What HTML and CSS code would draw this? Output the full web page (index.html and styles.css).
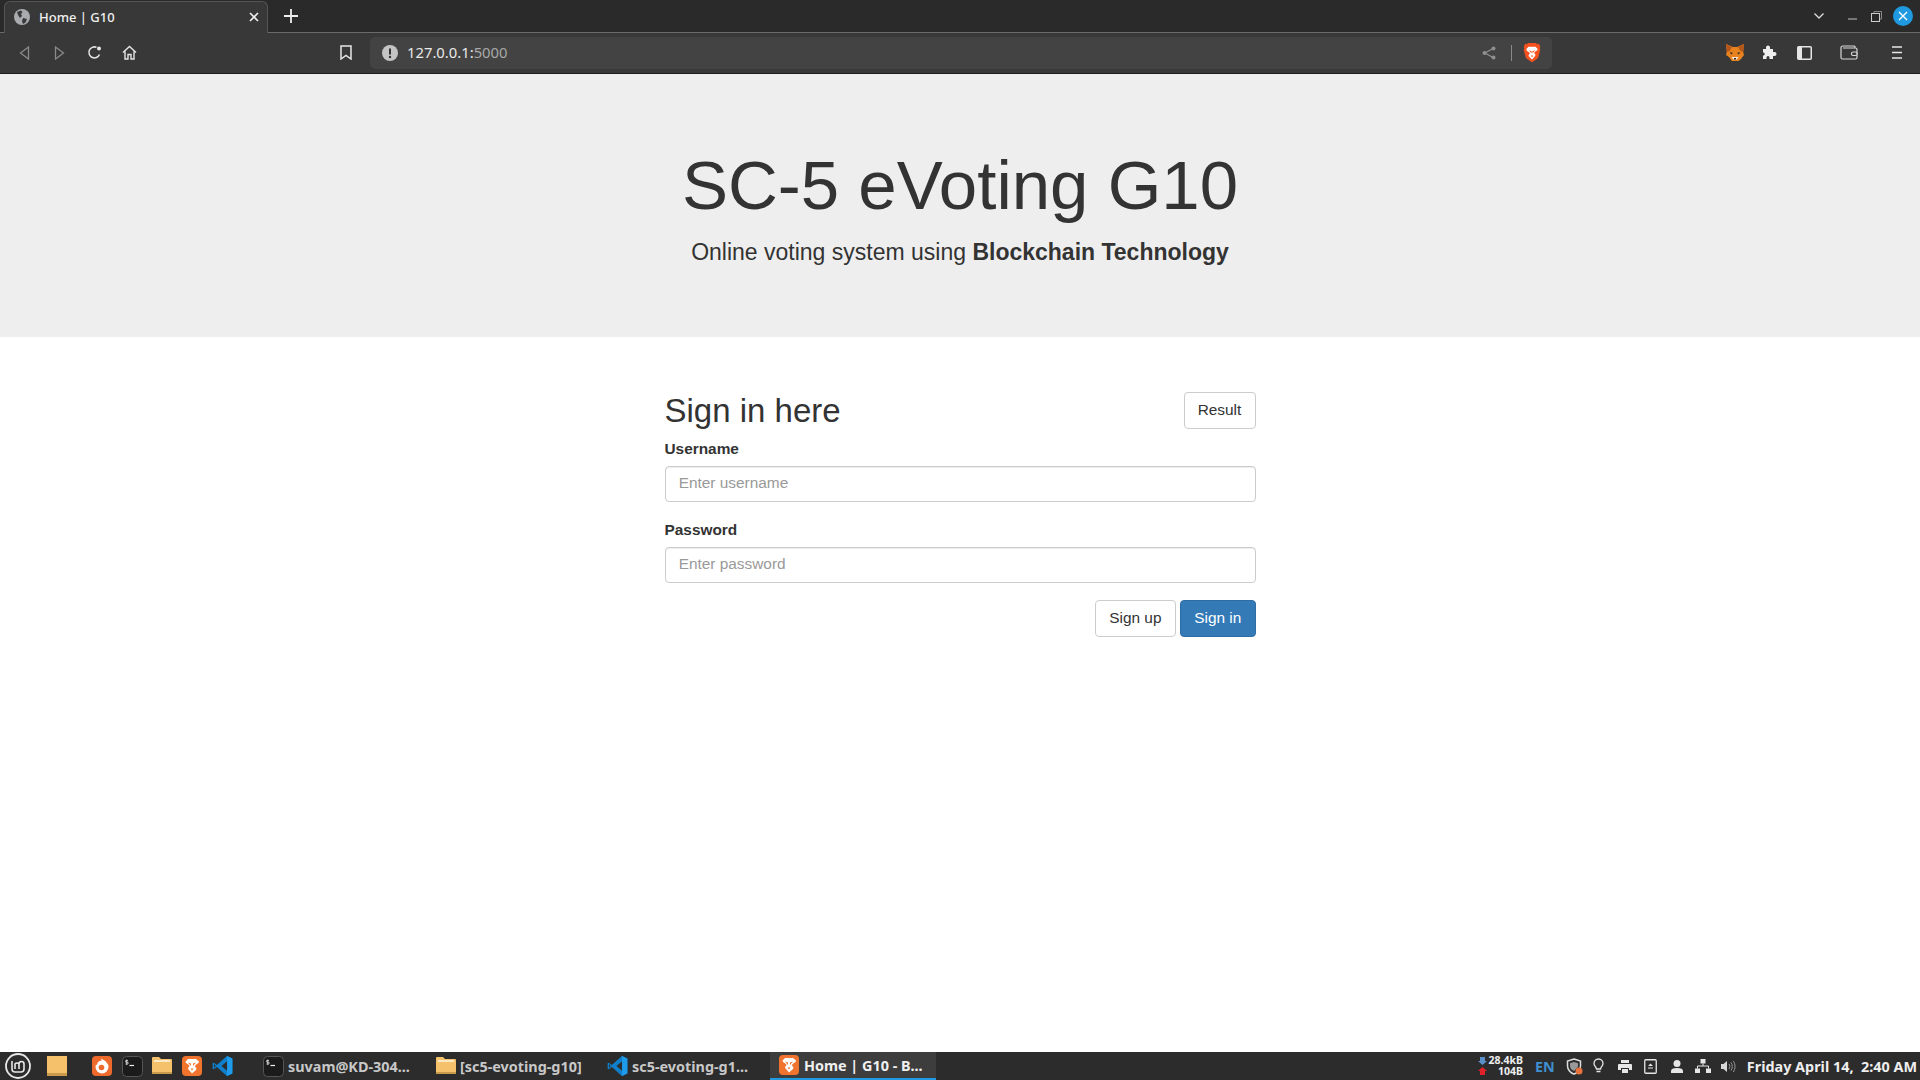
FILE: index.html
```html
<!DOCTYPE html>
<html lang="en">
<head>
    <meta charset="UTF-8">
    <meta name="viewport" content="width=device-width, initial-scale=1.0">
    <title>Home | G10</title>
    <link rel="stylesheet" href="styles.css">
</head>
<body>
    <svg class="defs" width="0" height="0">
        <symbol id="brave" viewBox="0 0 20 24">
            <path fill="#f4511e" d="M5.5 1h9L16 2.500l2-.5 1.500 3.500-.7 1.500.7 1.500-2.200 8.500c-.3 1-1 1.700-1.800 2.300l-4.500 3.200-.5.300h-1l-.5-.3-4.500-3.200c-.8-.6-1.500-1.300-1.800-2.300L.5 9l.7-1.500L.5 6 2 2l2 .5z"/>
            <path fill="#fff" d="M6 5.500h8l2.500 2.500-.5 1.500-3 2-.5 1 1.500 2-.5 1.500L10 20l-3.500-3.500-.5-1.500 1.500-2-.5-1-3-2L3.500 8z"/>
            <path fill="#f4511e" d="M6.500 9.500l3 1v2.500zM13.500 9.500l-3 1v2.500zM8.500 15.500h3L10 17.500z"/>
        </symbol>
        <symbol id="brave-tile" viewBox="0 0 20 20">
            <rect width="20" height="20" rx="4" fill="#f0742d"/>
            <path fill="#fff" d="M6 3h8l3 2.500-.5 1.500-3 2-.5 1.500 1.500 2-.5 1.500L10 17.500 6.500 13.500 6 12l1.500-2L7 9 4 7l-.5-1.500z"/>
            <path fill="#f0742d" d="M6 6.500l3 1v2.500zM14 6.500l-3 1v2.500zM8.500 12.500h3L10 14.500z"/>
        </symbol>
        <symbol id="term" viewBox="0 0 21 21">
            <rect x=".5" y=".5" width="20" height="20" rx="4" fill="#1b1b1b" stroke="#555"/>
            <path d="M6 4.500H3.700v1.700H6v1.800H3.500M4.700 3.500v5.500" fill="none" stroke="#ddd" stroke-width=".8"/>
            <path d="M7.500 9.500h4.500" stroke="#eee" stroke-width="1.200"/>
        </symbol>
        <symbol id="vscode" viewBox="0 0 100 100">
            <path fill="#0f7fcb" fill-rule="evenodd" d="M97 14L71 2 23 45 9 34l-6 3v26l6 3 14-11 48 43 26-12zM72 27L45 50l27 23zM10 41l8 9-8 9z"/>
            <path fill="#1f9bec" d="M71 2l26 12v72L71 98l1-25V27z"/>
        </symbol>
        <symbol id="folder" viewBox="0 0 20 20">
            <path fill="#f5c26b" d="M0 2a1 1 0 0 1 1-1h6l2 2h10a1 1 0 0 1 1 1v13a1 1 0 0 1-1 1H1a1 1 0 0 1-1-1z"/>
            <path fill="#fbe8c4" d="M2 4h16v2H2z"/>
            <path fill="#c99a4c" d="M0 16h20v1a1 1 0 0 1-1 1H1a1 1 0 0 1-1-1z"/>
        </symbol>
    </svg>

    <div class="tabstrip">
        <div class="tab">
            <svg class="favicon" width="16" height="16" viewBox="0 0 16 16"><circle cx="8" cy="8" r="8" fill="#a9abae"/><path fill="#3a3a3a" d="M3 3l4-1.500L8.500 3 7 5l1 2-2 2-2-3zM9 9l4 1-1.500 3.500L9 15l-1-3z"/></svg>
            <span class="tab-title">Home | G10</span>
            <svg class="tab-close" width="10" height="10" viewBox="0 0 10 10"><path d="M1 1l8 8M9 1l-8 8" stroke="#eee" stroke-width="1.6"/></svg>
        </div>
        <svg class="tab-new" width="14" height="14" viewBox="0 0 14 14"><path d="M7 0v14M0 7h14" stroke="#eee" stroke-width="1.8"/></svg>
        <div class="window-btns">
            <svg class="win-chevron" width="10" height="6" viewBox="0 0 10 6"><path d="M.5.500L5 5 9.500.500" fill="none" stroke="#ddd" stroke-width="1.3"/></svg>
            <svg class="win-min" width="9" height="2" viewBox="0 0 9 2"><path d="M0 1h9" stroke="#aaa" stroke-width="1.2"/></svg>
            <svg class="win-max" width="11" height="11" viewBox="0 0 11 11"><path d="M3 2V.500h7.500V8H9" fill="none" stroke="#888"/><rect x=".5" y="2.500" width="8" height="8" fill="none" stroke="#ccc"/></svg>
            <div class="win-close"><svg width="10" height="10" viewBox="0 0 10 10"><path d="M1 1l8 8M9 1l-8 8" stroke="#fff" stroke-width="1.3"/></svg></div>
        </div>
    </div>

    <div class="toolbar">
        <svg class="nav-back" width="11" height="14" viewBox="0 0 11 14"><path d="M9.500 1L1.500 7l8 6z" fill="none" stroke="#8a8a8a" stroke-width="1.3"/></svg>
        <svg class="nav-forward" width="11" height="14" viewBox="0 0 11 14"><path d="M1.500 1l8 6-8 6z" fill="none" stroke="#8a8a8a" stroke-width="1.3"/></svg>
        <svg class="nav-reload" width="15" height="15" viewBox="0 0 15 15"><path d="M12.500 9.500A5.500 5.500 0 1 1 9.500 2.300" fill="none" stroke="#e6e6e6" stroke-width="1.5"/><circle cx="12" cy="3.500" r="2" fill="#e6e6e6"/></svg>
        <svg class="nav-home" width="15" height="15" viewBox="0 0 15 15"><path d="M1 7.500L7.500 1.500 14 7.500M3 6.500V14h3V9.500h3V14h3V6.500" fill="none" stroke="#e6e6e6" stroke-width="1.4"/></svg>
        <svg class="nav-bookmark" width="12" height="15" viewBox="0 0 12 15"><path d="M1 1h10v13l-5-3.500L1 14z" fill="none" stroke="#e6e6e6" stroke-width="1.5"/></svg>
        <div class="urlbar">
            <svg class="url-alert" width="16" height="16" viewBox="0 0 16 16"><circle cx="8" cy="8" r="8" fill="#c4c4c4"/><path d="M8 3.500v6" stroke="#333" stroke-width="2"/><circle cx="8" cy="12" r="1.200" fill="#333"/></svg>
            <span class="url-text">127.0.0.1:<span class="url-port">5000</span></span>
            <svg class="url-share" width="14" height="14" viewBox="0 0 14 14"><path d="M11 2.500L3 7l8 4.500" fill="none" stroke="#8f8f8f" stroke-width="1.3"/><circle cx="11.500" cy="2.500" r="2" fill="#8f8f8f"/><circle cx="2.500" cy="7" r="2" fill="#8f8f8f"/><circle cx="11.500" cy="11.500" r="2" fill="#8f8f8f"/></svg>
            <span class="url-sep"></span>
            <svg class="url-brave" width="18" height="21"><use href="#brave"/></svg>
        </div>
        <svg class="ext-fox" width="18" height="17" viewBox="0 0 18 17"><path fill="#e8821e" d="M0 0l7 3h4l7-3-.8 8 .8 3-3 4-3.500 3h-5L3 13 0 11l.8-3z"/><path fill="#b5561a" d="M0 0l6 3-2.500 4L.8 8zM18 0l-6 3 2.500 4 2.700 1z"/><path fill="#f0e6d8" d="M5.500 13h7L11 15.500H7z"/><path fill="#2b2b2b" d="M4 8l3 1-2 1.500zM14 8l-3 1 2 1.500zM8 14h2v1.500H8z"/></svg>
        <svg class="ext-puzzle" width="15" height="15" viewBox="0 0 15 15"><path fill="#eee" d="M1 4h3V2.500a2 2 0 0 1 4 0V4h3v3h1.500a2 2 0 0 1 0 4H11v3H7.500v-1.500a1.500 1.500 0 0 0-3 0V14H1v-3.500h1a2 2 0 0 0 0-3H1z"/></svg>
        <svg class="ext-sidebar" width="15" height="14" viewBox="0 0 15 14"><rect x=".75" y=".75" width="13.500" height="12.500" rx="1" fill="none" stroke="#e6e6e6" stroke-width="1.5"/><path fill="#e6e6e6" d="M1 1h4v12H1z"/></svg>
        <svg class="ext-wallet" width="18" height="15" viewBox="0 0 18 15"><path d="M15 3V2a1 1 0 0 0-1-1H3C1.500 1 1 2 1 3v9.500c0 1 .7 1.500 1.500 1.500h13c1 0 1.500-.5 1.500-1.500V5c0-1-.5-2-1.500-2H3" fill="none" stroke="#d8d8d8" stroke-width="1.2"/><rect x="11.500" y="7" width="5.500" height="3.500" rx="1.500" fill="#383838" stroke="#d8d8d8" stroke-width="1.2"/></svg>
        <svg class="ext-menu" width="10" height="13" viewBox="0 0 10 13"><path d="M0 1h10M0 6.500h10M0 12h10" stroke="#e6e6e6" stroke-width="1.3"/></svg>
    </div>

    <header class="jumbotron">
        <h1>SC-5 eVoting G10</h1>
        <p>Online voting system using <strong>Blockchain Technology</strong></p>
    </header>

    <main class="signin">
        <div class="signin-head">
            <h2>Sign in here</h2>
            <button type="button" class="btn">Result</button>
        </div>
        <form>
            <div class="form-group">
                <label for="username">Username</label>
                <input type="text" id="username" placeholder="Enter username">
            </div>
            <div class="form-group">
                <label for="password">Password</label>
                <input type="password" id="password" placeholder="Enter password">
            </div>
            <div class="form-actions">
                <button type="button" class="btn">Sign up</button>
                <button type="submit" class="btn btn-primary">Sign in</button>
            </div>
        </form>
    </main>

    <footer class="taskbar">
        <svg class="menu-logo" width="26" height="26" viewBox="0 0 26 26"><circle cx="13" cy="13" r="12" fill="none" stroke="#e8e8e8" stroke-width="1.8"/><path d="M7 8v8a3 3 0 0 0 3 3h6a3 3 0 0 0 3-3v-5a2.500 2.500 0 0 0-5 0v5M14 11a2.500 2.500 0 0 0-4 0v5" fill="none" stroke="#e8e8e8" stroke-width="1.6"/></svg>
        <svg class="launch-files" width="20" height="20" viewBox="0 0 20 20"><rect width="20" height="20" fill="#f5c26b"/><path fill="#c99a4c" d="M0 17h20v3H0z"/></svg>
        <svg class="launch-firefox" width="20" height="20" viewBox="0 0 20 20"><rect width="20" height="20" rx="4" fill="#ee6a2c"/><circle cx="10" cy="11" r="6.500" fill="#fff"/><circle cx="9.500" cy="11.500" r="2.800" fill="#ee6a2c"/><path fill="#fff" d="M9 2.500l5 3-3 2.500z"/><path fill="#ee6a2c" d="M3 8l3-3-1 4z"/></svg>
        <svg class="launch-term" width="21" height="21"><use href="#term"/></svg>
        <svg class="launch-folder" width="20" height="20"><use href="#folder"/></svg>
        <svg class="launch-brave" width="20" height="20"><use href="#brave-tile"/></svg>
        <svg class="launch-code" width="21" height="22"><use href="#vscode"/></svg>

        <div class="task task-term"><svg width="21" height="21"><use href="#term"/></svg><span>suvam@KD-304...</span></div>
        <div class="task task-folder"><svg width="20" height="20"><use href="#folder"/></svg><span>[sc5-evoting-g10]</span></div>
        <div class="task task-code"><svg width="21" height="22"><use href="#vscode"/></svg><span>sc5-evoting-g1...</span></div>
        <div class="task task-active"><svg width="20" height="20"><use href="#brave-tile"/></svg><span>Home | G10 - B...</span></div>

        <div class="tray">
            <div class="netspeed">
                <svg width="9" height="20" viewBox="0 0 9 20"><path fill="#5b8fc9" d="M2 1h5v4h2L4.500 9 0 5h2z"/><path fill="#e2222a" d="M4.500 11L9 15H7v4H2v-4H0z"/></svg>
                <div class="netspeed-vals"><span>28.4kB</span><span>104B</span></div>
            </div>
            <span class="tray-lang">EN</span>
            <svg class="tray-shield" width="17" height="17" viewBox="0 0 17 17"><path d="M8 1l6.500 2v5c0 3.500-3 7-6.500 8-3.500-1-6.500-4.500-6.500-8V3z" fill="none" stroke="#ddd" stroke-width="1.5"/><path fill="#999" d="M8 4l4 1.200v3.500L8 13c-2.500-1-4-3-4-5V5.200z"/><circle cx="13" cy="13" r="3.500" fill="#e9713a"/></svg>
            <svg class="tray-bulb" width="11" height="16" viewBox="0 0 11 16"><path d="M3.500 11c0-2-2.500-3-2.500-5.500a4.500 4.500 0 0 1 9 0C10 8 7.500 9 7.500 11z" fill="none" stroke="#e6e6e6" stroke-width="1.3"/><path d="M3.500 13.500h4" stroke="#e6e6e6" stroke-width="1.5"/></svg>
            <svg class="tray-print" width="14" height="13" viewBox="0 0 14 13"><path fill="#e6e6e6" d="M3 0h8v3H3zM1 4h12a1 1 0 0 1 1 1v5h-3V8H3v2H0V5a1 1 0 0 1 1-1zM4 9h6v4H4z"/></svg>
            <svg class="tray-box" width="13" height="15" viewBox="0 0 13 15"><rect x=".75" y=".75" width="11.500" height="13.500" rx="1" fill="none" stroke="#e6e6e6" stroke-width="1.3"/><path fill="#e6e6e6" d="M6.500 4.500l2.500 2.500H4zM4 8.500h5v1H4z"/></svg>
            <svg class="tray-user" width="12" height="13" viewBox="0 0 12 13"><circle cx="6" cy="3.500" r="3.500" fill="#e6e6e6"/><path fill="#e6e6e6" d="M0 13v-2c0-2 2-3 6-3s6 1 6 3v2z"/></svg>
            <svg class="tray-net" width="16" height="14" viewBox="0 0 16 14"><path fill="#e6e6e6" d="M5.500 0h5v4.500h-5zM0 9.500h5V14H0zM11 9.500h5V14h-5z"/><path d="M8 4.500V7M2.500 9.500V7h11v2.500" fill="none" stroke="#e6e6e6"/></svg>
            <svg class="tray-sound" width="15" height="13" viewBox="0 0 15 13"><path fill="#d8d8d8" d="M0 4h2.500L6 1v11L2.500 9H0z"/><path d="M8 4c1 1.500 1 3.500 0 5M10 2.500c1.700 2.500 1.700 5.500 0 8M12.300 1c2.300 3.300 2.300 7.700 0 11" fill="none" stroke="#9a9a9a"/></svg>
            <span class="tray-clock">Friday April 14,  2:40 AM</span>
        </div>
    </footer>
</body>
</html>
```

FILE: styles.css
```css
html, body {
    margin: 0;
    padding: 0;
    height: 100%;
}

body {
    height: 1080px;
    overflow: hidden;
    display: flex;
    flex-direction: column;
    background-color: #fff;
    color: #333;
    font-family: "Liberation Sans", Arial, sans-serif;
}

.defs {
    position: absolute;
}

svg {
    flex: none;
    display: block;
}

/* browser tabs */
.tabstrip {
    height: 32px;
    flex: none;
    display: flex;
    align-items: center;
    background-color: #2a2a2a;
    border-bottom: 1px solid #6a6a6a;
    border-top: 1px solid #333;
    box-sizing: content-box;
    margin-top: -1px;
}

.tab {
    width: 264px;
    height: 32px;
    margin-left: 4px;
    margin-bottom: -1px;
    padding: 0 8px 0 9px;
    box-sizing: border-box;
    display: flex;
    align-items: center;
    background-color: #383838;
    border: 1px solid #555;
    border-bottom: none;
    border-radius: 6px 6px 0 0;
    color: #f0f0f0;
    font-family: "Noto Sans", sans-serif;
    font-size: 13px;
    font-weight: 500;
}

.tab-title {
    margin-left: 9px;
    flex: 1;
}

.tab-new {
    margin-left: 16px;
}

.window-btns {
    margin-left: auto;
    display: flex;
    align-items: center;
}

.win-chevron {
    margin-right: 24px;
}

.win-min {
    margin-right: 14px;
    margin-top: 5px;
}

.win-max {
    margin-right: 11px;
}

.win-close {
    width: 20px;
    height: 20px;
    margin-right: 7px;
    border-radius: 50%;
    background-color: #1f9ae0;
    display: flex;
    align-items: center;
    justify-content: center;
}

/* browser toolbar */
.toolbar {
    height: 40px;
    flex: none;
    display: flex;
    align-items: center;
    background-color: #383838;
    border-bottom: 1px solid #1c1c1c;
}

.toolbar > svg {
    margin-bottom: 1px;
}

.nav-back {
    margin-left: 19px;
}

.nav-forward {
    margin-left: 24px;
}

.nav-reload {
    margin-left: 22px;
}

.nav-home {
    margin-left: 20px;
}

.nav-bookmark {
    margin-left: 203px;
}

.urlbar {
    width: 1182px;
    height: 32px;
    margin-left: 18px;
    margin-bottom: 1px;
    padding: 0 10px 0 12px;
    box-sizing: border-box;
    display: flex;
    align-items: center;
    background-color: #434343;
    border-radius: 5px;
}

.url-text {
    margin-left: 9px;
    margin-bottom: 1px;
    font-family: "Noto Sans", sans-serif;
    font-size: 14.8px;
    color: #e8e8e8;
}

.url-port {
    color: #a8a8a8;
}

.url-share {
    margin-left: auto;
}

.url-sep {
    width: 1px;
    height: 16px;
    margin-left: 15px;
    background-color: #8a8a8a;
}

.url-brave {
    margin-left: 11px;
    margin-right: 1px;
}

.ext-fox {
    margin-left: 174px;
}

.ext-puzzle {
    margin-left: 18px;
}

.ext-sidebar {
    margin-left: 20px;
}

.ext-wallet {
    margin-left: 28px;
}

.ext-menu {
    margin-left: 34px;
}

/* page */
.jumbotron {
    height: 263px;
    flex: none;
    box-sizing: border-box;
    padding-top: 77px;
    background-color: #eee;
    text-align: center;
}

.jumbotron h1 {
    margin: 0;
    font-size: 69px;
    font-weight: 400;
    line-height: 69px;
}

.jumbotron p {
    margin: 15px 0 0;
    font-size: 23px;
    line-height: 34px;
}

.signin {
    width: 591px;
    margin: 55px auto 0;
    flex: 1;
}

.signin-head {
    display: flex;
    justify-content: space-between;
    align-items: center;
}

.signin-head h2 {
    margin: 0;
    font-size: 33px;
    font-weight: 400;
    line-height: 36px;
}

.signin form {
    margin-top: 9px;
}

.btn {
    height: 37px;
    padding: 0 13.2px 2px;
    border: 1px solid #ccc;
    border-radius: 4px;
    background-color: #fff;
    color: #333;
    font-family: inherit;
    font-size: 15.4px;
}

.btn-primary {
    background-color: #337ab7;
    border-color: #2e6da4;
    color: #fff;
}

label {
    display: block;
    margin: 0 0 6.7px;
    font-size: 15.4px;
    font-weight: 700;
    line-height: 21px;
}

input {
    display: block;
    width: 100%;
    height: 36.4px;
    box-sizing: border-box;
    padding: 0 13.2px 2px;
    border: 1px solid #ccc;
    border-radius: 4px;
    font-family: inherit;
    font-size: 15.4px;
    color: #555;
    box-shadow: inset 0 1px 1px rgba(0, 0, 0, .075);
}

input::placeholder {
    color: #999;
}

.form-group {
    margin-bottom: 17px;
}

.form-actions {
    display: flex;
    justify-content: flex-end;
    gap: 4.4px;
}

/* desktop panel */
.taskbar {
    height: 28px;
    flex: none;
    display: flex;
    align-items: center;
    background-color: #2c2c2c;
    font-family: "Noto Sans", sans-serif;
    font-size: 14.4px;
    font-weight: 700;
    color: #c8c8c8;
}

.menu-logo {
    margin-left: 5px;
}

.launch-files {
    margin-left: 16px;
}

.launch-firefox {
    margin-left: 25px;
}

.launch-term {
    margin-left: 10px;
}

.launch-folder {
    margin-left: 9px;
}

.launch-brave {
    margin-left: 10px;
}

.launch-code {
    margin-left: 10px;
}

.task {
    height: 28px;
    display: flex;
    align-items: center;
    gap: 4px;
    white-space: nowrap;
}

.task-term {
    margin-left: 30px;
    width: 173px;
}

.task-folder {
    width: 171px;
}

.task-code {
    width: 163px;
}

.task-active {
    width: 166px;
    padding-left: 9px;
    box-sizing: border-box;
    gap: 5px;
    background-color: #3d3d3d;
    border-bottom: 2px solid #1f9ae0;
    color: #f0f0f0;
}

.tray {
    margin-left: auto;
    margin-right: 3px;
    display: flex;
    align-items: center;
    color: #eee;
}

.netspeed {
    display: flex;
    align-items: center;
    gap: 2px;
    font-size: 10.5px;
    line-height: 11px;
}

.netspeed-vals {
    display: flex;
    flex-direction: column;
    align-items: flex-end;
}

.tray-lang {
    margin-left: 12px;
    color: #3f8fd0;
}

.tray-shield {
    margin-left: 11px;
}

.tray-bulb {
    margin-left: 10px;
}

.tray-print {
    margin-left: 14px;
}

.tray-box {
    margin-left: 12px;
}

.tray-user {
    margin-left: 14px;
}

.tray-net {
    margin-left: 12px;
}

.tray-sound {
    margin-left: 10px;
}

.tray-clock {
    margin-left: 11px;
    white-space: pre;
}
```
